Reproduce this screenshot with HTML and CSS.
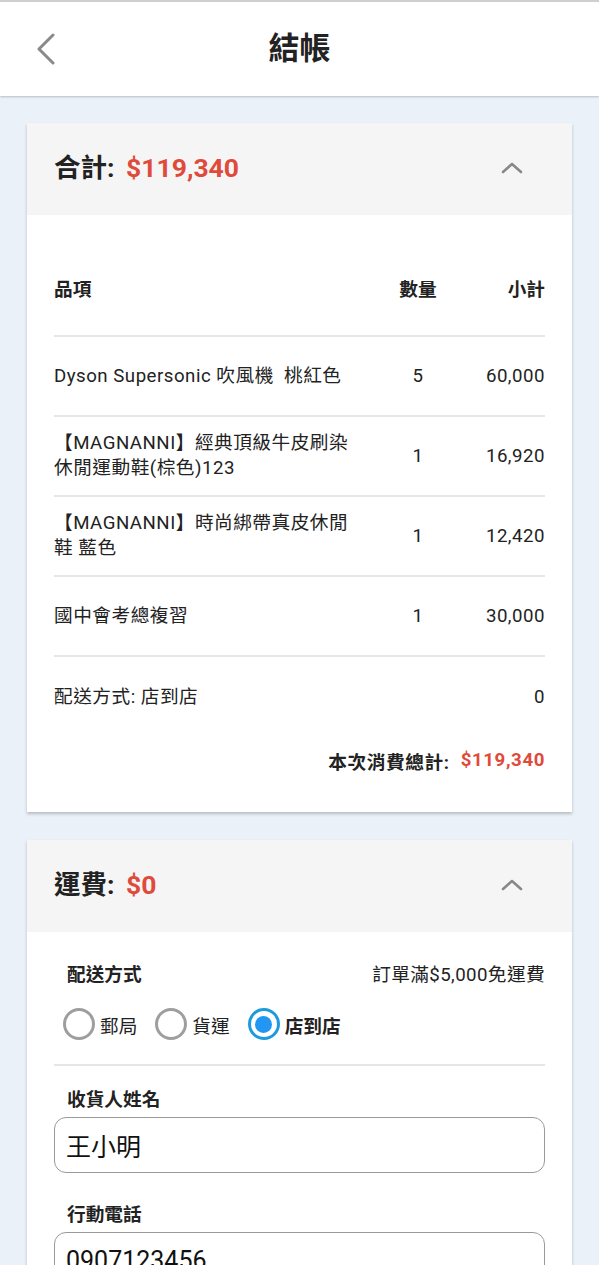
FILE: index.html
```html
<!DOCTYPE html>
<html lang="zh-Hant">
<head>
<meta charset="utf-8">
<title>結帳</title>
<link rel="stylesheet" href="styles.css">
</head>
<body>
<header class="topbar">
  <button class="back" aria-label="返回">
    <svg width="20" height="32" viewBox="0 0 20 32"><polyline points="17,2 3,16 17,30" fill="none" stroke="#8a8a8a" stroke-width="3" stroke-linecap="round" stroke-linejoin="round"/></svg>
  </button>
  <h1 class="title">結帳</h1>
</header>

<main class="page">
  <section class="card">
    <div class="card-head">
      <div class="card-title">合計: <span class="red amount">$119,340</span></div>
      <svg class="chev" width="22" height="12" viewBox="0 0 22 12"><polyline points="2,10 11,2 20,10" fill="none" stroke="#888" stroke-width="2.6" stroke-linecap="round" stroke-linejoin="round"/></svg>
    </div>
    <div class="card-body">
      <div class="row row-head">
        <div class="c-item">品項</div>
        <div class="c-qty">數量</div>
        <div class="c-sub">小計</div>
      </div>
      <div class="row">
        <div class="c-item">Dyson Supersonic 吹風機&nbsp; 桃紅色</div>
        <div class="c-qty">5</div>
        <div class="c-sub">60,000</div>
      </div>
      <div class="row">
        <div class="c-item">【MAGNANNI】經典頂級牛皮刷染休閒運動鞋(棕色)123</div>
        <div class="c-qty">1</div>
        <div class="c-sub">16,920</div>
      </div>
      <div class="row">
        <div class="c-item">【MAGNANNI】時尚綁帶真皮休閒鞋 藍色</div>
        <div class="c-qty">1</div>
        <div class="c-sub">12,420</div>
      </div>
      <div class="row">
        <div class="c-item">國中會考總複習</div>
        <div class="c-qty">1</div>
        <div class="c-sub">30,000</div>
      </div>
      <div class="row row-plain">
        <div class="c-item">配送方式: 店到店</div>
        <div class="c-qty"></div>
        <div class="c-sub">0</div>
      </div>
      <div class="grand"><span>本次消費總計:</span><span class="red">$119,340</span></div>
    </div>
  </section>

  <section class="card">
    <div class="card-head">
      <div class="card-title">運費: <span class="red amount">$0</span></div>
      <svg class="chev" width="22" height="12" viewBox="0 0 22 12"><polyline points="2,10 11,2 20,10" fill="none" stroke="#888" stroke-width="2.6" stroke-linecap="round" stroke-linejoin="round"/></svg>
    </div>
    <div class="card-body form-body">
      <div class="ship-head">
        <span class="label">配送方式</span>
        <span class="note">訂單滿$5,000免運費</span>
      </div>
      <div class="radios">
        <label class="opt"><span class="radio"></span><span>郵局</span></label>
        <label class="opt"><span class="radio"></span><span>貨運</span></label>
        <label class="opt on"><span class="radio"></span><span>店到店</span></label>
      </div>
      <div class="field first">
        <div class="label">收貨人姓名</div>
        <div class="input">王小明</div>
      </div>
      <div class="field">
        <div class="label">行動電話</div>
        <div class="input">0907123456</div>
      </div>
    </div>
  </section>
</main>
</body>
</html>
```

FILE: styles.css
```css
* { box-sizing: border-box; }

html, body {
  margin: 0;
  padding: 0;
}

body {
  background: #ebf1f9;
  font-family: Roboto, "Noto Sans CJK TC", sans-serif;
  color: #222;
  overflow: hidden;
}

.topbar {
  height: 96px;
  background: #fff;
  border-top: 2px solid #cfcfcf;
  box-shadow: 0 1px 2px rgba(0, 0, 0, 0.22);
  display: flex;
  align-items: center;
  justify-content: center;
  position: relative;
}

.back {
  position: absolute;
  left: 36px;
  top: 31px;
  border: 0;
  background: none;
  padding: 0;
  width: 20px;
  height: 32px;
}

.title {
  margin: 0;
  font-size: 31px;
  font-weight: 700;
  color: #222;
  line-height: 1;
  margin-top: -2px;
}

.page {
  padding: 27px 27px 0;
  display: flex;
  flex-direction: column;
  gap: 28px;
}

.card {
  background: #fff;
  box-shadow: 0 2px 3px rgba(0, 0, 0, 0.22);
}

.card-head {
  height: 92px;
  background: #f5f5f5;
  display: flex;
  align-items: center;
  justify-content: space-between;
  padding: 0 49px 0 27px;
}

.card-title {
  font-size: 26.5px;
  font-weight: 700;
  color: #222;
  line-height: 32px;
  margin-top: -2px;
}

.card-title .amount { margin-left: 5px; }

.red { color: #e04a3b; }

.chev { display: block; margin-top: -2px; }

.card-body {
  padding: 27px 27px 27px;
}

.row {
  display: grid;
  grid-template-columns: 1fr 54px 100px;
  align-items: center;
  height: 80px;
  border-bottom: 2px solid #e6e6e6;
  font-size: 18.67px;
  letter-spacing: 0.5px;
  line-height: 25px;
}

.row-head {
  height: 95px;
  font-weight: 700;
  padding-top: 4px;
  letter-spacing: 0;
}

.row-plain { border-bottom: 0; }

.c-item { padding-right: 36px; }
.c-qty { text-align: center; }
.c-sub { text-align: right; }

.grand {
  height: 50px;
  display: flex;
  align-items: center;
  justify-content: flex-end;
  font-size: 18.67px;
  font-weight: 700;
  letter-spacing: 0.6px;
  gap: 11px;
  margin-top: -2px;
}

.ship-head {
  display: flex;
  justify-content: space-between;
  align-items: center;
  height: 26px;
  padding-left: 13px;
  font-size: 18.67px;
}

.label {
  font-weight: 700;
  font-size: 18.67px;
}

.note { font-weight: 400; letter-spacing: 0.4px; }

.radios {
  display: flex;
  align-items: center;
  gap: 18px;
  height: 34px;
  margin-top: 22px;
  padding-left: 9px;
  font-size: 18.67px;
}

.opt {
  display: flex;
  align-items: center;
  gap: 5px;
}

.radio {
  width: 32px;
  height: 32px;
  border-radius: 50%;
  border: 3px solid #9e9e9e;
  display: flex;
  align-items: center;
  justify-content: center;
}

.opt.on { font-weight: 700; }

.opt.on .radio { border-color: #1e9bdc; border-width: 3.5px; }

.opt.on .radio::after {
  content: "";
  width: 17px;
  height: 17px;
  border-radius: 50%;
  background: #2196f3;
}

.field .label {
  height: 26px;
  line-height: 26px;
  padding-left: 13px;
}

.field.first {
  margin-top: 23px;
  border-top: 2px solid #e6e6e6;
  padding-top: 21px;
}

.field + .field { margin-top: 29px; }

.input {
  margin-top: 4px;
  height: 56px;
  border: 1.5px solid #9a9a9a;
  border-radius: 12px;
  padding: 0 11px;
  display: flex;
  align-items: center;
  font-size: 25px;
  font-weight: 400;
  color: #111;
}
```
